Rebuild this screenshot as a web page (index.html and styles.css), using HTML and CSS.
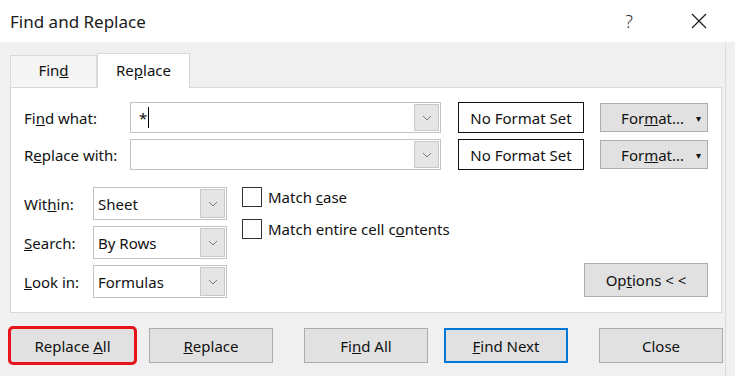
FILE: index.html
```html
<!DOCTYPE html>
<html lang="en">
<head>
  <meta charset="UTF-8" />
  <title>Find and Replace</title>
  <link rel="stylesheet" href="styles.css">
</head>
<body>
  <div class="dialog">
    <div class="titlebar">
      <span class="title">Find and Replace</span>
      <span class="help">?</span>
      <svg class="close-x" width="16" height="16" viewBox="0 0 16 16">
        <path d="M1 1 L15 15 M15 1 L1 15" stroke="#1a1a1a" stroke-width="1.2" fill="none" />
      </svg>
    </div>

    <div class="main">
      <div class="tabs">
        <div class="tab">Fin<u>d</u></div>
        <div class="tab active">Re<u>p</u>lace</div>
      </div>

      <div class="panel">
        <div class="row">
          <label class="lbl wide">Fi<u>n</u>d what:</label>
          <div class="combo">
            <span class="value">*</span><span class="caret"></span>
            <span class="drop"><svg width="10" height="6" viewBox="0 0 10 6"><path d="M1 1 L5 5 L9 1" stroke="#7a7a7a" fill="none" /></svg></span>
          </div>
          <div class="fmt-box">No Format Set</div>
          <button class="btn fmt-btn">For<u>m</u>at... <span class="arrow">▾</span></button>
        </div>
        <div class="row">
          <label class="lbl wide">R<u>e</u>place with:</label>
          <div class="combo">
            <span class="value"></span>
            <span class="drop"><svg width="10" height="6" viewBox="0 0 10 6"><path d="M1 1 L5 5 L9 1" stroke="#7a7a7a" fill="none" /></svg></span>
          </div>
          <div class="fmt-box">No Format Set</div>
          <button class="btn fmt-btn">For<u>m</u>at... <span class="arrow">▾</span></button>
        </div>

        <div class="options">
          <div class="selects">
            <label class="lbl">Wit<u>h</u>in:</label>
            <div class="select">Sheet<span class="drop"><svg width="10" height="6" viewBox="0 0 10 6"><path d="M1 1 L5 5 L9 1" stroke="#7a7a7a" fill="none" /></svg></span></div>
            <label class="lbl"><u>S</u>earch:</label>
            <div class="select">By Rows<span class="drop"><svg width="10" height="6" viewBox="0 0 10 6"><path d="M1 1 L5 5 L9 1" stroke="#7a7a7a" fill="none" /></svg></span></div>
            <label class="lbl"><u>L</u>ook in:</label>
            <div class="select">Formulas<span class="drop"><svg width="10" height="6" viewBox="0 0 10 6"><path d="M1 1 L5 5 L9 1" stroke="#7a7a7a" fill="none" /></svg></span></div>
          </div>

          <div class="checks">
            <label class="check"><span class="box"></span><span>Match <u>c</u>ase</span></label>
            <label class="check"><span class="box"></span><span>Match entire cell c<u>o</u>ntents</span></label>
          </div>

          <button class="btn options-btn">Op<u>t</u>ions &lt; &lt;</button>
        </div>
      </div>

      <div class="buttons">
        <button class="btn action highlight">Replace <u>A</u>ll</button>
        <button class="btn action replace"><u>R</u>eplace</button>
        <button class="btn action find-all">Fi<u>n</u>d All</button>
        <button class="btn action find-next"><u>F</u>ind Next</button>
        <button class="btn action close">Close</button>
      </div>
    </div>
  </div>
</body>
</html>
```

FILE: styles.css
```css
body {
  margin: 0;
  padding: 0;
  font-family: 'Noto Sans', 'Open Sans', sans-serif;
  font-size: 15px;
  color: #111;
}

.dialog {
  width: 735px;
  height: 376px;
  background: #f0f0f0;
  overflow: hidden;
}

.titlebar {
  height: 42px;
  background: white;
  display: flex;
  align-items: center;
}

.title {
  margin-left: 10px;
  font-size: 17px;
  color: #1a1a1a;
}

.help {
  margin-left: auto;
  font-size: 18px;
  font-weight: 300;
  color: #333;
}

.close-x {
  margin-left: 58px;
  margin-right: 28px;
}

.main {
  width: 726px;
  height: 334px;
  border-right: 1px solid #dcdcdc;
  padding: 11px 0 0 10px;
  box-sizing: border-box;
}

.tabs {
  display: flex;
  align-items: flex-end;
  height: 34px;
}

.tab {
  width: 87px;
  height: 32px;
  box-sizing: border-box;
  border: 1px solid #d9d9d9;
  border-bottom: none;
  background: #f5f5f5;
  display: flex;
  align-items: center;
  justify-content: center;
  padding-bottom: 3px;
}

.tab.active {
  width: 93px;
  height: 35px;
  background: white;
  margin-bottom: -1px;
  position: relative;
  padding-bottom: 2px;
}

.panel {
  width: 712px;
  height: 226px;
  box-sizing: border-box;
  border: 1px solid #d9d9d9;
  background: white;
  padding: 14px 13px 0 13px;
}

.row {
  display: flex;
  align-items: center;
  height: 31px;
  margin-bottom: 6px;
}

.lbl {
  white-space: nowrap;
}

.lbl.wide {
  width: 106px;
}

.combo {
  width: 311px;
  height: 31px;
  box-sizing: border-box;
  border: 1px solid #c3c3c3;
  display: flex;
  align-items: center;
  margin-right: 17px;
}

.combo .value {
  margin-left: 8px;
}

.caret {
  width: 1px;
  height: 21px;
  background: #000;
  margin-left: 1px;
}

.drop {
  margin-left: auto;
  width: 25px;
  height: 27px;
  margin-right: 1px;
  box-sizing: border-box;
  border: 1px solid #c9c9c9;
  background: #e5e5e5;
  display: flex;
  align-items: center;
  justify-content: center;
}

.fmt-box {
  width: 126px;
  height: 31px;
  box-sizing: border-box;
  border: 1px solid #111;
  display: flex;
  align-items: center;
  justify-content: center;
  margin-right: 16px;
}

.btn {
  font-family: inherit;
  font-size: 15px;
  color: #111;
  background: #e1e1e1;
  border: 1px solid #adadad;
  padding: 0;
}

.fmt-btn {
  width: 108px;
  height: 29px;
  text-align: right;
  padding-right: 6px;
}

.fmt-btn .arrow {
  font-size: 10px;
  margin-left: 8px;
  vertical-align: 2px;
}

.options {
  display: flex;
  margin-top: 17px;
}

.selects {
  display: grid;
  grid-template-columns: 69px 134px;
  grid-auto-rows: 33px;
  row-gap: 6px;
  align-items: center;
}

.select {
  height: 33px;
  box-sizing: border-box;
  border: 1px solid #c3c3c3;
  display: flex;
  align-items: center;
  padding-left: 4px;
}

.select .drop {
  height: 29px;
}

.checks {
  display: flex;
  flex-direction: column;
  gap: 12px;
  margin-left: 15px;
}

.check {
  display: flex;
  align-items: center;
  height: 20px;
}

.box {
  width: 20px;
  height: 20px;
  box-sizing: border-box;
  border: 1px solid #333;
  margin-right: 6px;
}

.options-btn {
  margin-left: auto;
  align-self: flex-end;
  width: 124px;
  height: 34px;
  margin-bottom: 1px;
}

.buttons {
  display: flex;
  margin-top: 15px;
}

.action {
  width: 124px;
  height: 35px;
}

.highlight {
  width: 125px;
  outline: 3px solid #e8141c;
  outline-offset: -1px;
  border-radius: 3px;
}

.replace {
  margin-left: 14px;
}

.find-all {
  margin-left: 31px;
}

.find-next {
  margin-left: 16px;
  border: 2px solid #0078d7;
}

.close {
  margin-left: 31px;
}
```
